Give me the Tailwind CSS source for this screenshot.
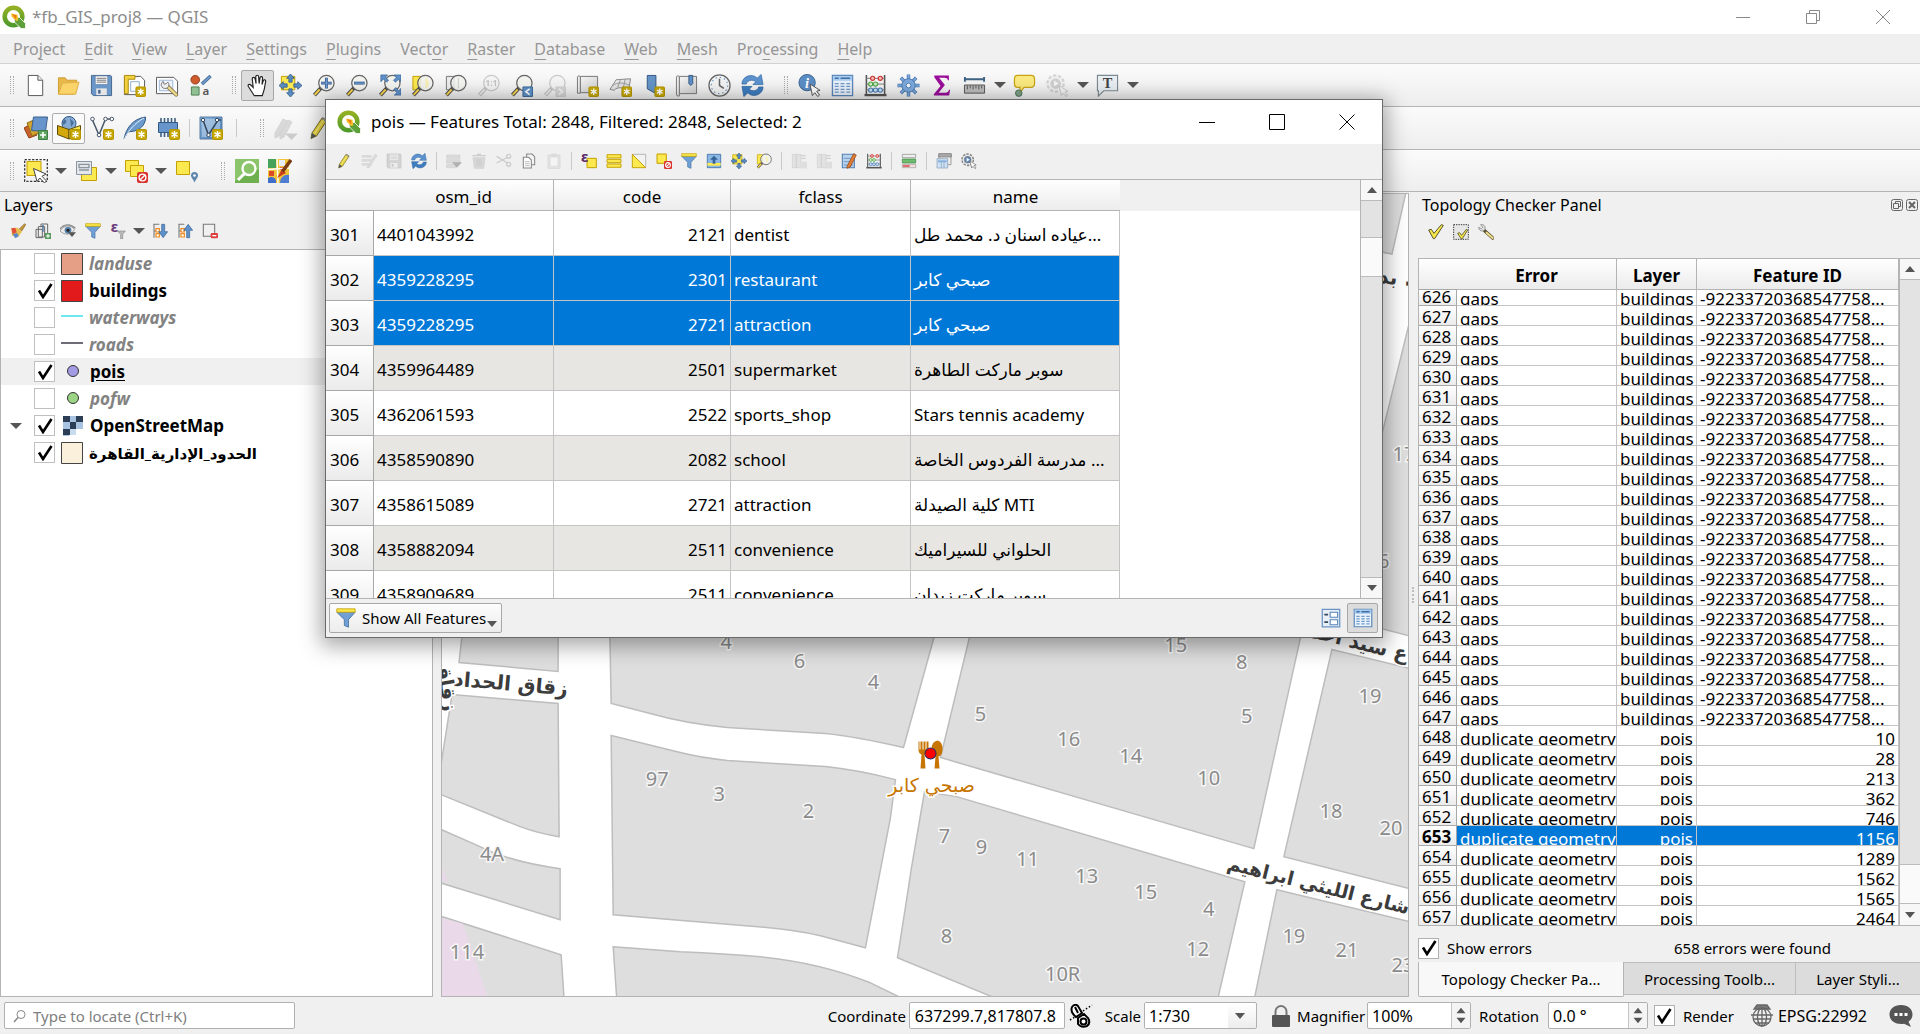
<!DOCTYPE html>
<html lang="en">
<head>
<meta charset="utf-8">
<title>*fb_GIS_proj8 — QGIS</title>
<script src="https://cdn.jsdelivr.net/npm/@tailwindcss/browser@4"></script>
</head>
<body class="h-screen flex flex-col overflow-hidden bg-[#f0f0f0] text-black text-[15px] leading-5 font-['Noto_Sans','DejaVu_Sans',sans-serif]">

<svg class="absolute size-0" aria-hidden="true">
  <defs>
    <linearGradient id="g-blue" x1="0" y1="0" x2="1" y2="1"><stop offset="0" stop-color="#8fb8e0"/><stop offset="1" stop-color="#3f78b5"/></linearGradient>
    <linearGradient id="g-green" x1="0" y1="0" x2="0" y2="1"><stop offset="0" stop-color="#93b023"/><stop offset="1" stop-color="#4f9a2c"/></linearGradient>
    <linearGradient id="g-grey" x1="0" y1="0" x2="1" y2="1"><stop offset="0" stop-color="#f6f6f6"/><stop offset="1" stop-color="#cfcfcf"/></linearGradient>
  </defs>
  <symbol id="star" viewBox="0 0 24 24"><rect x="13.500" y="13.500" width="10" height="10" rx="1" fill="#c8a800" stroke="#b39500"/><path d="M18.500 15v7M15.500 16.700l6 3.600M21.500 16.700l-6 3.600" stroke="#fff" stroke-width="1.500"/></symbol>
  <symbol id="mag" viewBox="0 0 24 24"><path d="M10 14l-7.500 8" stroke="#4a4a4a" stroke-width="4"/><path d="M8 16.200l-5.200 5.500" stroke="#fcd94e" stroke-width="2"/><circle cx="15" cy="9.500" r="8" fill="#f3f3ee" fill-opacity=".85" stroke="#666" stroke-width="1.300"/></symbol>
  <symbol id="pen" viewBox="0 0 24 24"><path d="M5 17L15 2l4.500 3L9.500 20 4 22.500z" fill="#e8d43c" stroke="#77702a"/><path d="M5 17l4.500 3L4 22.500z" fill="#555"/><path d="M15 2l4.500 3" stroke="#8a8a7a" stroke-width="2.500"/><path d="M7.500 17.500l9.500-14" stroke="#faf19a"/></symbol>
  <symbol id="qgis" viewBox="0 0 24 24"><circle cx="11.500" cy="11.500" r="8.800" fill="none" stroke="url(#g-green)" stroke-width="4.600"/><path d="M12 12.500h5.500l6 6v5h-4.500l-6.500-6.500z" fill="#5da03a" stroke="#fff" stroke-width=".8"/><path d="M9 8.500l6.500 1.200.8 5.800-2 .5-4.500-4z" fill="#f5c22c"/><path d="M10 9l4.500 1.500-.5 4z" fill="#ee7913"/></symbol>
  <symbol id="new" viewBox="0 0 24 24"><path d="M4.500 1.500h10l5 5v16h-15z" fill="#fff" stroke="#555"/><path d="M14.500 1.500v5h5" fill="#eee" stroke="#555"/></symbol>
  <symbol id="open" viewBox="0 0 24 24"><path d="M1.500 4h7l2 2.500h10V10L18 21H1.500z" fill="#e8b84a" stroke="#cf9c30"/><path d="M1.500 21l4-11.500 17.500-1-3.500 12.500z" fill="#fbd469" stroke="#dcae45"/></symbol>
  <symbol id="save" viewBox="0 0 24 24"><path d="M2.500 1.500h19l1 1v20H3.500l-2-2v-19z" fill="#6a97c8" stroke="#44648c"/><path d="M5.500 2h13v9h-13z" fill="#f4f4f4" stroke="#51749d" stroke-width=".6"/><path d="M7 4.500h10M7 6.500h10M7 8.500h10" stroke="#777"/><path d="M6.500 15h11v7h-11z" fill="#e6e6e6"/><path d="M8.500 16.500h2.500v4H8.500z" fill="#44648c"/></symbol>
  <symbol id="newlay" viewBox="0 0 24 24"><path d="M1.500 2.500h17l4 4v15h-21z" fill="#fff" stroke="#555"/><path d="M1.500 1.500h11v4h-7v15h-4z" fill="#f2d13d" stroke="#a98a14"/><path d="M8 8h9v10H8z" fill="#fff" stroke="#8eabcb"/><use href="#star"/></symbol>
  <symbol id="laymgr" viewBox="0 0 24 24"><path d="M.5 3.500h18l4 4v13H.5z" fill="#fff" stroke="#555"/><path d="M3.500 6.500h14v11h-14z" fill="#eef3fa" stroke="#9db6d6"/><path d="M11 12l10 9.500" stroke="#7d7142" stroke-width="4.200" stroke-linecap="round"/><path d="M13 14l8 7.500" stroke="#ecd68c" stroke-width="2.600" stroke-linecap="round"/><path d="M12.500 8.500a4 4 0 1 1-5-.8l1 3 2.300-.7z" fill="#eee" stroke="#777"/></symbol>
  <symbol id="style" viewBox="0 0 24 24"><circle cx="6.500" cy="6" r="4.500" fill="#cf5b2c" stroke="#90401f"/><path d="M13.500 10.500l9-8.500" stroke="#466a92" stroke-width="3.500"/><path d="M14 10l8-7.500" stroke="#6f9bcc" stroke-width="2"/><path d="M2.500 13.500h8v8.500h-8z" fill="#8fc092" stroke="#4f7f55"/><text x="14" y="22" font-size="12" font-weight="600" fill="#555">a</text></symbol>
  <symbol id="hand" viewBox="0 0 24 24"><path d="M8.500 22.500L2.500 13c-1-2 1-3 2.500-1.500L7.500 14 6.500 5c0-2 2.500-2 3 0l1 5-.3-7c0-2.300 3-2.300 3 0l.5 7 .9-6c.4-2 2.900-1.600 2.700.5l-.6 6.500 1.300-4c.7-1.700 2.900-1 2.500 1l-1.500 8-2 6.500z" fill="#fff" stroke="#222" stroke-width="1.200"/></symbol>
  <symbol id="arrows4" viewBox="0 0 24 24"><path d="M12 0l4 4.500h-2.300v4h-3.400v-4H8zM12 24l4-4.500h-2.300v-4h-3.400v4H8zM0 12l4.500-4v2.300h4v3.400h-4V16zM24 12l-4.500-4v2.300h-4v3.400h4V16z" fill="#5a8cc4" stroke="#2f5580" stroke-width=".8"/></symbol>
  <symbol id="pansel" viewBox="0 0 24 24"><path d="M2.500 2.500h14v14h-14z" fill="#fce94f" stroke="#c4a000"/><use href="#arrows4"/></symbol>
  <symbol id="zin" viewBox="0 0 24 24"><use href="#mag"/><path d="M15 4v11M9.500 9.500h11" stroke="#30588c" stroke-width="3"/><path d="M15 4.500v10M10 9.500h10" stroke="#6d9bd0" stroke-width="1.500"/></symbol>
  <symbol id="zout" viewBox="0 0 24 24"><use href="#mag"/><path d="M9.500 9.500h11" stroke="#30588c" stroke-width="3"/><path d="M10 9.500h10" stroke="#6d9bd0" stroke-width="1.500"/></symbol>
  <symbol id="zfull" viewBox="0 0 24 24"><use href="#mag"/><path d="M3 1h7L7.700 3.300l3.300 3.200-2 2-3.200-3.300L3 8zM24 1v7l-2.500-2.500-3.300 3-2-2 3.200-3.200L17 1zM24 22v-7l-2.500 2.500-3-3.300-2 2 3.200 3.300L17 22z" fill="#5f92ca" stroke="#3d689b" stroke-width=".8"/></symbol>
  <symbol id="zsel" viewBox="0 0 24 24"><path d="M2 2.500h8v14H2z" fill="#fce94f" stroke="#c4a000"/><use href="#mag"/><path d="M15 4a6 6 0 0 1 0 11z" fill="#f7f1b8"/></symbol>
  <symbol id="zlay" viewBox="0 0 24 24"><path d="M2.500 2.500h8v14h-8z" fill="#eee" stroke="#777"/><use href="#mag"/><path d="M15 4v11" stroke="#ccc"/></symbol>
  <symbol id="z11" viewBox="0 0 24 24"><use href="#mag"/><text x="15" y="13" font-size="9" font-weight="bold" text-anchor="middle" fill="#555">1:1</text></symbol>
  <symbol id="zlast" viewBox="0 0 24 24"><use href="#mag"/><path d="M13.500 13.500h10v10h-10z" fill="#5f92ca" stroke="#3d689b"/><path d="M20.500 15.500l-4 3 4 3" fill="none" stroke="#fff" stroke-width="1.600"/></symbol>
  <symbol id="znext" viewBox="0 0 24 24"><use href="#mag"/><path d="M13.500 13.500h10v10h-10z" fill="#999" stroke="#888"/><path d="M16.500 15.500l4 3-4 3" fill="none" stroke="#fff" stroke-width="1.600"/></symbol>
  <symbol id="mapview" viewBox="0 0 24 24"><path d="M4.500 2.500h18v17h-18z" fill="url(#g-grey)" stroke="#777"/><path d="M1.500 4a1.500 1.500 0 0 1 3-1v17h-3z" fill="#eee" stroke="#777"/><use href="#star"/></symbol>
  <symbol id="map3d" viewBox="0 0 24 24"><path d="M1 16L7.500 6l15-1-2 12c-5-3-12-4-15 0z" fill="url(#g-grey)" stroke="#888"/><path d="M4 12c5-4 12-3 17.500 0M12 5.500L9 14M17 5l-2 9" fill="none" stroke="#999"/><use href="#star"/></symbol>
  <symbol id="bkadd" viewBox="0 0 24 24"><path d="M5.500 1.500h9v19l-9-5z" fill="#6594c8" stroke="#34567f"/><use href="#star"/></symbol>
  <symbol id="bks" viewBox="0 0 24 24"><path d="M4.500 2.500h18v18h-18z" fill="url(#g-grey)" stroke="#777"/><path d="M1.500 4a1.500 1.500 0 0 1 3-1v20h-1a2 2 0 0 1-2-2z" fill="#eee" stroke="#777"/><path d="M14.500 1.500h4V10l-2 2-2-2z" fill="#5f92ca" stroke="#34567f"/></symbol>
  <symbol id="clock" viewBox="0 0 24 24"><circle cx="12" cy="12" r="11" fill="#f4f4f4" stroke="#666" stroke-width="1.300"/><path d="M12 5v7l4.500 3" fill="none" stroke="#666" stroke-width="1.600"/><circle cx="12" cy="12" r="8.500" fill="none" stroke="#6b97c8" stroke-dasharray="1.500 2.950" stroke-width="1.200"/></symbol>
  <symbol id="refresh" viewBox="0 0 24 24"><path d="M1 10.500C1 4 8 0 14 2.300l3 2L21 .5 23 11H12.500l3-3C12 5.500 7 6 5.500 10.500z" fill="#5c93cf" stroke="#3a6ea8" stroke-width=".8"/><path d="M23 13.500C23 20 16 24 10 21.700l-3-2-4 3.800L1 13h10.500l-3 3c3.500 2.500 8.500 2 10-2.500z" fill="#3f7dc0" stroke="#3268a3" stroke-width=".8"/></symbol>
  <symbol id="info" viewBox="0 0 24 24"><circle cx="9.500" cy="9" r="8.500" fill="#5b8ec6" stroke="#38638f"/><text x="9.500" y="14.500" font-size="15" font-weight="bold" font-style="italic" font-family="Liberation Serif" text-anchor="middle" fill="#fff">i</text><path d="M12.500 10.500l2.500 12 2.500-3 3 4 2-1.500-3-4 3.500-1z" fill="#fff" stroke="#555"/></symbol>
  <symbol id="table" viewBox="0 0 24 24"><path d="M1.500 1.500h21v21h-21z" fill="#eaf2fb" stroke="#5b87bb" stroke-width="1.400"/><path d="M2 2h20v5H2z" fill="#a9cdf0"/><path d="M4 4.500h4M10 4.500h10" stroke="#426fa5" stroke-width="1.600"/><path d="M4 10h4M10 10h4M16 10h4M4 13h4M10 13h4M16 13h4M4 16h4M10 16h4M16 16h4M4 19h4M10 19h4M16 19h4" stroke="#6f9bcb" stroke-width="1.300"/></symbol>
  <symbol id="abacus" viewBox="0 0 24 24"><path d="M2.500 1v20M21.500 1v20" stroke="#555" stroke-width="1.600"/><path d="M2 4.500h20M2 10.500h20M2 16.500h20" stroke="#777"/><path d="M.5 22h23" stroke="#555" stroke-width="2.400"/><g stroke-width="1.200"><circle cx="9" cy="4.500" r="2.200" fill="#f4c0bd" stroke="#cc2f2c"/><circle cx="17" cy="4.500" r="2.200" fill="#f4c0bd" stroke="#cc2f2c"/><circle cx="7" cy="10.500" r="2.200" fill="#d2f0cc" stroke="#55a84b"/><circle cx="12" cy="10.500" r="2.200" fill="#d2f0cc" stroke="#55a84b"/><circle cx="7" cy="16.800" r="2.200" fill="#cfe3f5" stroke="#4a7eb5"/><circle cx="12" cy="16.800" r="2.200" fill="#cfe3f5" stroke="#4a7eb5"/><circle cx="17" cy="16.800" r="2.200" fill="#cfe3f5" stroke="#4a7eb5"/></g></symbol>
  <symbol id="gear" viewBox="0 0 24 24"><g stroke="#4b7cb5" stroke-width="3.600"><path d="M12 .5v23M.5 12h23M4 4l16 16M20 4L4 20"/></g><g stroke="#7ea9dc" stroke-width="2"><path d="M12 1v22M1 12h22M4.300 4.300l15.400 15.400M19.700 4.300L4.300 19.700"/></g><circle cx="12" cy="12" r="7" fill="#7ea9dc" stroke="#4b7cb5"/><circle cx="12" cy="12" r="2.500" fill="#f0f5fb" stroke="#4b7cb5"/></symbol>
  <symbol id="sigma" viewBox="0 0 24 24"><path d="M4.500 1.500h15.200v5h-1c-.5-2-1.500-2.700-3.500-2.700H9.500l6 7.700-6.500 8h7c2.200 0 3.200-.9 4-3h1l-1 6H4v-1.500l7-8.500-6.500-9z" fill="#9b0d9b"/></symbol>
  <symbol id="ruler" viewBox="0 0 24 24"><path d="M2 5.500h20M2 3v5M22 3v5" stroke="#3f6385" stroke-width="2"/><path d="M1.500 11.500h21v8.500h-21z" fill="#bdbdbd" stroke="#555"/><path d="M4.500 12v4M7.500 12v3M10.500 12v4M13.500 12v3M16.500 12v4M19.500 12v3" stroke="#555"/></symbol>
  <symbol id="tip" viewBox="0 0 24 24"><path d="M5 1.500h14c3 0 3.500 1.500 3.500 4v4.500c0 3-1 4-4 4h-7L7 20l.5-6H5c-2.500 0-3.500-1-3.500-4V5.500c0-3 1-4 3.500-4z" fill="#fbe980" stroke="#c8a415" stroke-width="1.300"/><circle cx="6" cy="20" r="3.400" fill="#7ea386" stroke="#4f7358"/></symbol>
  <symbol id="gearcur" viewBox="0 0 24 24"><circle cx="10" cy="10" r="8.500" fill="#ececec" stroke="#888" stroke-width="2.400" stroke-dasharray="3.500 1.800"/><circle cx="10" cy="10" r="5" fill="#5b86b8" stroke="#777"/><path d="M8.500 7l4.500 3-4.500 3z" fill="#fff"/><path d="M13.500 12l2.500 10.500 2-2.500 3 3.500 1.500-1.200-2.700-3.500 3-.8z" fill="#fff" stroke="#666"/></symbol>
  <symbol id="textann" viewBox="0 0 24 24"><path d="M1.500 1.500h21v16H8L2.500 23V17.500h-1z" fill="#e9eff3" stroke="#7e8a92" stroke-width="1.200"/><text x="12" y="15" font-size="15" font-weight="bold" font-family="Liberation Serif" text-anchor="middle" fill="#444">T</text></symbol>
  <symbol id="dsm" viewBox="0 0 24 24"><path d="M0 12l7-4 6 11-8 3z" fill="#c9602c" stroke="#8c3d16"/><path d="M3 7l9-4 5 13-9 4z" fill="#d5a32c" stroke="#91701b"/><path d="M9.500 1h14l-2 14.500-14-1z" fill="#6795cb" stroke="#3a618e"/><path d="M14.500 14.500h9v9h-9z" fill="#5ba35f" stroke="#3f7f46"/><path d="M19 16v6M16 19h6" stroke="#fff" stroke-width="1.600"/></symbol>
  <symbol id="gpkg" viewBox="0 0 24 24"><circle cx="12" cy="7.500" r="7" fill="#86acd6" stroke="#335a86"/><path d="M7 3c3 1 3 3 1 5l-3 1M13 1c0 3 3 3 4 6l-3 4" fill="#4a719c"/><path d="M.5 9.500L12 13.500V23L.5 18.500z" fill="#d3a80d" stroke="#5e4c06"/><path d="M12 13.500l11.500-4v9L12 23z" fill="#fae94c" stroke="#5e4c06"/><use href="#star"/></symbol>
  <symbol id="shp" viewBox="0 0 24 24"><path d="M2 3l7 16L15.500 3h7" fill="none" stroke="#48596a" stroke-width="1.500"/><g fill="#fff" stroke="#48596a"><circle cx="2.500" cy="3" r="1.800"/><circle cx="9" cy="19" r="1.800"/><circle cx="15.500" cy="3" r="1.800"/><circle cx="21.800" cy="3" r="1.800"/></g><use href="#star"/></symbol>
  <symbol id="feather" viewBox="0 0 24 24"><path d="M1 23C3 13 9 3 22.500 1c.5 5-3 12-11 14L5 16z" fill="#6c9bcd" stroke="#335a86"/><path d="M1 23C6 14 12 7 21 2" fill="none" stroke="#e3eefa"/><use href="#star"/></symbol>
  <symbol id="chip" viewBox="0 0 24 24"><path d="M5 2v19M8.500 2v19M12 2v19M15.500 2v19M19 2v19" stroke="#3e5f83" stroke-width="1.600"/><path d="M2.500 6.500h19v10h-19z" fill="#6795cb" stroke="#335a86"/><use href="#star"/></symbol>
  <symbol id="virt" viewBox="0 0 24 24"><path d="M1 1h22v22H1z" fill="url(#g-blue)" stroke="#5a7da3"/><path d="M3 3h18v18H3z" fill="#bdd2e8" fill-opacity=".6"/><path d="M4 4l5.500 15L19 4h3" fill="none" stroke="#33475c" stroke-width="1.500"/><g fill="#fff" stroke="#33475c"><circle cx="4" cy="4" r="1.700"/><circle cx="9.500" cy="19" r="1.700"/><circle cx="18" cy="4" r="1.700"/></g><use href="#star"/></symbol>
  <symbol id="pens" viewBox="0 0 24 24"><path d="M1 17L9 3l4 2L5 20l-4 2zM6 18l8-14 4 2-8 15-4 2z" fill="#999" stroke="#888"/><path d="M11 17.500h13L17.500 24z" fill="#777"/></symbol>
  <symbol id="select" viewBox="0 0 24 24"><path d="M3 2.500h14v14H3z" fill="#fce94f" stroke="#c4a000"/><path d="M.7.700h22.600v21.600H.7z" fill="none" stroke="#333" stroke-dasharray="2.200 1.500" stroke-width="1.300"/><path d="M9.500 9.500l3.500 13 2.800-3.500 4.700 5 2-2-4.500-4.700 4-2.300z" fill="#fff" stroke="#444"/></symbol>
  <symbol id="selform" viewBox="0 0 24 24"><path d="M7.500 8.500h15v13h-15z" fill="#fce94f" stroke="#c4a000"/><path d="M2.500 2.500h15v13h-15z" fill="#e4e8ec" stroke="#8b959e"/><path d="M5 5.500h10v3H5zM5 11h10" fill="#fff" stroke="#8b959e" stroke-width="1.300"/></symbol>
  <symbol id="desel" viewBox="0 0 24 24"><path d="M1.500 1.500h13v11h-13z" fill="#fce94f" stroke="#c4a000"/><path d="M6.500 6.500h13v11h-13z" fill="#fce94f" stroke="#c4a000"/><rect x="13" y="13" width="11" height="11" rx="2" fill="#d9322f"/><circle cx="18.500" cy="18.500" r="3.400" fill="none" stroke="#fff" stroke-width="1.400"/><path d="M16 21l5-5" stroke="#fff" stroke-width="1.400"/></symbol>
  <symbol id="desel1" viewBox="0 0 24 24"><path d="M1.500 1.500h14v14h-14z" fill="#fce94f" stroke="#c4a000" stroke-width="1.500"/><rect x="12" y="12" width="12" height="12" rx="2" fill="#d9322f"/><circle cx="18" cy="18" r="3.600" fill="none" stroke="#fff" stroke-width="1.600"/><path d="M15.500 20.500l5-5" stroke="#fff" stroke-width="1.600"/></symbol>
  <symbol id="selloc" viewBox="0 0 24 24"><path d="M2.500 2.500h13v13h-13z" fill="#fce94f" stroke="#c4a000"/><path d="M20.500 23.500c-1-3-3.500-4.500-3.500-7a3.500 3.500 0 0 1 7 0c0 2.500-2.500 4-3.500 7z" fill="#5f87ac"/><circle cx="20.500" cy="16.500" r="1.300" fill="#fff"/></symbol>
  <symbol id="qms" viewBox="0 0 24 24"><path d="M0 0h24v24H0z" fill="#6fb04e"/><path d="M0 0h24v10L0 22z" fill="#8cc46b"/><circle cx="14" cy="9.500" r="6.500" fill="none" stroke="#fff" stroke-width="2.400"/><path d="M9.500 14.500L3 21" stroke="#fff" stroke-width="3"/></symbol>
  <symbol id="osm" viewBox="0 0 24 24"><path d="M0 0h21v24H0z" fill="#f1c63a"/><path d="M0 0h8v9H0z" fill="#47a35a"/><path d="M11 1h6v6h-6z" fill="#e9eef5"/><path d="M1 12h5v5H1zM12 8h4v3h-4z" fill="#d84b25"/><path d="M0 19c5-3 9 1 8 5H0z" fill="#3f6ecb"/><path d="M12 24c0-6 5-9 9-8v8z" fill="#4e7ed2"/><path d="M9 0l1 24M0 10.500l21-1.500" stroke="#fff" stroke-width="1.400"/><path d="M14 10l4 4-9 5z" fill="#c8401c"/><path d="M14.500 12.500L23 1" stroke="#7b3c12" stroke-width="3.500"/></symbol>
  <symbol id="brush" viewBox="0 0 24 24"><path d="M14 9l8-8 1.500 1.500-6 9.500z" fill="#c99a3d" stroke="#7a5a18"/><path d="M2 8l9-1 7 6-6 8-9-2z" fill="#e9c04d"/><path d="M2 8l6-1 2 7-6 3z" fill="#e2503c"/><path d="M4 17l7-2 2 5-5 3z" fill="#5c87c9"/></symbol>
  <symbol id="grp" viewBox="0 0 24 24"><path d="M9 6V1.500h10V17h-4M5 10V5.500h9.500V21H5zM1.500 22V9.500H11V22z" fill="none" stroke="#666" stroke-width="1.500"/><path d="M12 3v10" stroke="#3f6f9f" stroke-width="2"/><rect x="15" y="15" width="9" height="9" fill="#5b9b5f"/><path d="M19.500 16.500v6M16.500 19.500h6" stroke="#fff" stroke-width="1.500"/></symbol>
  <symbol id="eye" viewBox="0 0 24 24"><path d="M0 12C5 3 16 2 22 10c-5 8-15 9-22 2z" fill="#e8ebee" stroke="#777"/><path d="M0 9C5 2 15 0 23 8" fill="none" stroke="#888" stroke-width="2"/><circle cx="12" cy="11" r="5" fill="#547ea8"/><circle cx="12" cy="11" r="2.300" fill="#222"/><path d="M12 14h12l-6 7z" fill="#555"/></symbol>
  <symbol id="funnel" viewBox="0 0 24 24"><path d="M1 5h22l-8 9v9l-5-2v-7z" fill="#6f9fd4" stroke="#4371a5"/><path d="M1 1h22v4H1z" fill="#fbe84c" stroke="#c4a000"/></symbol>
  <symbol id="eps" viewBox="0 0 24 24"><text x="1" y="14" font-size="22" fill="#6b3a7a" font-weight="bold">ε</text><path d="M11 12h12l-4 5v7h-3v-7z" fill="#bbb" stroke="#888"/></symbol>
  <symbol id="expand" viewBox="0 0 24 24"><path d="M2 2h9M3 2v20M3 12h6" stroke="#777" stroke-width="1.600" fill="none"/><path d="M6 8.500h5v5H6zM6 16h5v5H6z" fill="#fff" stroke="#ee8a1d" stroke-width="1.800"/><path d="M14.500 2h4.500v11h4.500l-6.700 9-6.800-9h4.500z" fill="#5f92ca" stroke="#365f90"/></symbol>
  <symbol id="collapse" viewBox="0 0 24 24"><path d="M2 2h9M3 2v20M3 12h6" stroke="#777" stroke-width="1.600" fill="none"/><path d="M6 8.500h5v5H6zM6 16h5v5H6z" fill="#fff" stroke="#ee8a1d" stroke-width="1.800"/><path d="M14.500 22h4.500V11h4.500l-6.700-9-6.800 9h4.500z" fill="#5f92ca" stroke="#365f90"/></symbol>
  <symbol id="remove" viewBox="0 0 24 24"><path d="M2 2h17v18H2z" fill="#f0f0f0" stroke="#777" stroke-width="1.600"/><rect x="13" y="15" width="11" height="8" rx="2" fill="#df3d3d"/><path d="M15.500 19h6" stroke="#fff" stroke-width="2"/></symbol>
  <symbol id="multi" viewBox="0 0 24 24"><path d="M1 3h15v4H1zM1 9h15v4H1zM1 15h15v4H1z" fill="#aaa"/><path d="M9 22L21 2l3 2-12 18z" fill="#bbb" stroke="#777"/></symbol>
  <symbol id="addf" viewBox="0 0 24 24"><path d="M1 3h20v5H1zM1 10h20v5H1zM1 17h14v5H1z" fill="#aaa" stroke="#888"/><path d="M9 14h15l-7.500 8z" fill="#222"/></symbol>
  <symbol id="trash" viewBox="0 0 24 24"><path d="M3 7h18l-2 16H5z" fill="#c99" stroke="#977"/><path d="M2 4h20M9 2h6M9 9v11M12 9v11M15 9v11" stroke="#977" stroke-width="2"/></symbol>
  <symbol id="cut" viewBox="0 0 24 24"><path d="M1 5l16 10M1 15L18 6" stroke="#777" stroke-width="2"/><circle cx="19" cy="5" r="3" fill="none" stroke="#777" stroke-width="2"/><circle cx="19" cy="17" r="3" fill="none" stroke="#777" stroke-width="2"/></symbol>
  <symbol id="copy" viewBox="0 0 24 24"><path d="M8.500 1.500h8l4 4v12h-12z" fill="#f4f4f4" stroke="#888" stroke-width="1.600"/><path d="M3.500 6.500h8l4 4v12h-12z" fill="#fff" stroke="#888" stroke-width="1.600"/><path d="M6 13h7M6 16h7M6 19h7" stroke="#999"/></symbol>
  <symbol id="paste" viewBox="0 0 24 24"><path d="M3 3h18v20H3z" fill="#ccc" stroke="#888"/><path d="M6 6h12v14H6z" fill="#fff" stroke="#999"/><path d="M8 1h8v4H8z" fill="#aaa"/></symbol>
  <symbol id="selexp" viewBox="0 0 24 24"><path d="M9 8h14v14H9z" fill="#fce94f" stroke="#c4a000" stroke-width="1.500"/><text x="0" y="14" font-size="22" fill="#5c2c6a" font-weight="bold">ε</text></symbol>
  <symbol id="selall" viewBox="0 0 24 24"><path d="M1.500 2.500h21v5h-21zM1.500 9.500h21v5h-21zM1.500 16.500h21v5h-21z" fill="#fce94f" stroke="#c4a000" stroke-width="1.400"/></symbol>
  <symbol id="invert" viewBox="0 0 24 24"><path d="M2 2h20v20z" fill="#f2f2f2" stroke="#999"/><path d="M2 2v20h20z" fill="#fce94f" stroke="#c4a000" stroke-width="1.400"/></symbol>
  <symbol id="movetop" viewBox="0 0 24 24"><path d="M2 2h20v20H2z" fill="#8db6e2" stroke="#4f7fb3" stroke-width="1.500"/><path d="M2 15h20v4H2z" fill="#fce94f"/><path d="M12 4l6 6h-4v6h-4v-6H6z" fill="#34639a"/></symbol>
  <symbol id="newfld" viewBox="0 0 24 24"><path d="M2 2h6v20H2zM8 2h7v20H8z" fill="#c4c4b4" stroke="#888"/><path d="M14 13h10v10H14z" fill="#bbb5a0"/><path d="M15 4h7M15 8h7" stroke="#888" stroke-width="2"/></symbol>
  <symbol id="calc" viewBox="0 0 24 24"><path d="M2 2h18v20H2z" fill="#b8d2ee" stroke="#4f7fb3" stroke-width="1.600"/><path d="M4 8h14M4 13h14M4 18h14" stroke="#4f7fb3"/><path d="M9 20L19 1l4 2-9 18-5 2z" fill="#e07b35" stroke="#88410f"/></symbol>
  <symbol id="cond" viewBox="0 0 24 24"><path d="M2 2h20v5H2z" fill="#eee" stroke="#888"/><path d="M2 9h20v6H2z" fill="#6dbb6e" stroke="#3c8a3f"/><path d="M2 17h20v5H2z" fill="#f3dede" stroke="#999"/><path d="M3 19.500h10" stroke="#d33" stroke-width="2"/></symbol>
  <symbol id="dock" viewBox="0 0 24 24"><path d="M4.500 1.500h18v16h-18z" fill="#eee" stroke="#777"/><path d="M4 1h19v5H4z" fill="#aaa" stroke="#777"/><path d="M1.500 8.500h16v14h-16z" fill="#cfe2f5" stroke="#7f98b3"/><path d="M3 11h13v3H3z" fill="#86afd9"/><path d="M8 14v8M12 14v8" stroke="#7f98b3"/></symbol>
  <symbol id="validate" viewBox="0 0 24 24"><path d="M1 9l4-1 4 6L20 1l3 1L10 22H8z" fill="#f7e74a" stroke="#4a4a28" stroke-width="1.400"/></symbol>
  <symbol id="validext" viewBox="0 0 24 24"><path d="M1 1h22v22H1z" fill="#e6e6e6" stroke="#333" stroke-dasharray="2 1.600" stroke-width="1.500"/><path d="M7 14l3-1 3 4 7-9 2 1-8 13h-2z" fill="#f7e74a" stroke="#4a4a28" stroke-width="1.200"/></symbol>
  <symbol id="wrench" viewBox="0 0 24 24"><path d="M10 10l12 11" stroke="#5a5132" stroke-width="5" stroke-linecap="round"/><path d="M13 13l9 8" stroke="#f0dc8d" stroke-width="3" stroke-linecap="round"/><path d="M4 1c4-1 8 2 6.500 7L8 10.500C4 11 1 9 1 5l4 2 2-2z" fill="#ddd" stroke="#777"/></symbol>
  <symbol id="form" viewBox="0 0 24 24"><path d="M1.500 1.500h21v21h-21z" fill="#e9eff6" stroke="#6a93c4" stroke-width="1.500"/><path d="M4 8h4.500M4 17h4.500" stroke="#34475c" stroke-width="2"/><path d="M11 5h9v6h-9zM11 14h9v6h-9z" fill="#fff" stroke="#5585ba" stroke-width="1.300"/></symbol>
</svg>

<header class="shrink-0">
  <div class="h-[34px] bg-white flex items-center pl-[2px] text-[17px] text-[#8c8c8c]">
    <svg class="size-6"><use href="#qgis"/></svg>
    <h1 class="ml-1.5 flex-1">*fb_GIS_proj8 — QGIS</h1>
    <button aria-label="Minimize" class="w-[70px] h-full grid place-items-center"><svg class="size-4" viewBox="0 0 16 16"><path d="M1 8.500h14" stroke="#888"/></svg></button>
    <button aria-label="Restore" class="w-[70px] h-full grid place-items-center"><svg class="size-4" viewBox="0 0 16 16" fill="none" stroke="#888"><path d="M1.500 4.500h10v10h-10zM4.500 4V1.500h10v10H12"/></svg></button>
    <button aria-label="Close" class="w-[70px] h-full grid place-items-center mr-0.5"><svg class="size-4" viewBox="0 0 16 16"><path d="M1 1l14 14M15 1L1 15" stroke="#888"/></svg></button>
  </div>
  <nav id="menu" class="h-[30px] border-b border-[#d2d2d2] flex items-center gap-[19px] pl-[13px] text-base text-[#969696] underline-offset-4"></nav>
  <div id="tb1" class="h-[43px] border-b border-[#b4b4b4] bg-linear-to-b from-[#fbfbfb] to-[#eeeeee] flex items-center"></div>
  <div id="tb2" class="h-[43px] border-b border-[#b4b4b4] bg-linear-to-b from-[#fbfbfb] to-[#eeeeee] flex items-center"></div>
  <div id="tb3" class="h-[42px] border-b border-[#b4b4b4] bg-linear-to-b from-[#fbfbfb] to-[#eeeeee] flex items-center"></div>
</header>

<main class="flex-1 min-h-0 flex">
  <section class="w-[433px] shrink-0 flex flex-col">
    <h2 class="h-[26px] pl-1 flex items-center text-base">Layers</h2>
    <div id="tbl" class="h-[31px] pl-[5px] flex items-center pb-1.5"></div>
    <ul id="layers" class="flex-1 bg-white border border-[#b4b4b4] text-[17px] font-bold"></ul>
  </section>
  <div class="w-2 shrink-0"></div>
  <section class="flex-1 min-w-0 border border-[#b4b4b4] bg-white mt-px">
    <svg class="size-full" viewBox="442 195 965 803" preserveAspectRatio="xMinYMin slice" aria-label="Map canvas">
      <g fill="#dedede" stroke="#bdbdbd" stroke-width="1.500">
        <path d="M466 600l-7 63 99 9v-72z"/>
        <path d="M452 695l106 9 1 133q-20-3-39-10-20-8-79-32v-30z"/>
        <path d="M430 825l50 22q30 15 80 22v51L430 880z"/>
        <path d="M430 913l131 42 4 60H430z"/>
        <path d="M609 600l2 104 39 10q35 10 77 14l98 6q30 3 78 14l41-148z"/>
        <path d="M611 736l69 17q20 5 47 8l98 6q30 3 70 13l-5 38-25 130-45-12q-30-7-75-10l-132-11z"/>
        <path d="M613 947l67 5q45 2 80 5 60 6 110 26l45 22H617z"/>
        <path d="M978 600l-38 158 313 91 55-249z"/>
        <path d="M924 792l32 5 288 85-30 130-186 0-131-54q8-50 14-90z"/>
        <path d="M1331 650l90 22v220l-138-35z"/>
        <path d="M1276 890l150 36v90h-176z"/>
        <path d="M1340 180h68l-17 75-51-10z"/>
        <path d="M1412 305l-4 20-32 130v173l50 13V305z"/>
      </g>
      <path d="M442 918l21 6 27 80h-48zM442 868l6 15-6-2z" fill="#ead9e8"/>
      <g id="nums" font-size="20" text-anchor="middle" fill="#8b8b8b" stroke="#f6f6f6" stroke-width="3" paint-order="stroke" font-family="Noto Sans"></g>
      <g font-size="20" font-weight="bold" text-anchor="middle" fill="#3c3c3c" stroke="#fff" stroke-width="3" paint-order="stroke" font-family="DejaVu Sans">
        <text transform="translate(510 691) rotate(5)">زقاق الحداد</text>
        <text transform="translate(440 688) rotate(80)">زقاق</text>
        <text transform="translate(1316 892) rotate(14)" font-size="19">شارع الليثي ابراهيم</text>
        <text transform="translate(1350 648) rotate(14)">ع سيد احمد</text>
        <text transform="translate(1388 285) rotate(4)">بدر .</text>
      </g>
      <text x="931" y="792" font-size="19" text-anchor="middle" fill="#c77400" stroke="#fff" stroke-width="3" paint-order="stroke" font-family="DejaVu Sans">صبحي كابر</text>
      <path d="M918 742v8q0 4 3 5l-1 14h5l-1-14q4-1 4-5v-8h-2v8h-1v-8h-2v8h-1v-8h-2v8h-1v-8zM937 741q5 1 5 9 0 6-4 7l1 12h-5l1-12q-4-1-4-7 0-8 6-9z" fill="#c77400"/>
      <circle cx="930" cy="754" r="5.500" fill="#f00" stroke="#232d6b"/>
    </svg>
  </section>
  <div class="w-2 shrink-0 grid place-items-center"><span class="h-4 border-l-2 border-dotted border-[#bbb]"></span></div>
  <section class="w-[503px] shrink-0 flex flex-col">
    <div class="h-[26px] pl-[5px] pr-0.5 flex items-center gap-[3px] text-base">
      <h2 class="flex-1">Topology Checker Panel</h2>
      <button aria-label="Float panel"><svg class="size-3" viewBox="0 0 12 12" fill="none" stroke="#666"><rect x=".5" y=".5" width="11" height="11" rx="2"/><path d="M2.500 4.500h5v5h-5zM4.500 4V2.500h5v5H8"/></svg></button>
      <button aria-label="Close panel"><svg class="size-3" viewBox="0 0 12 12" fill="none" stroke="#666"><rect x=".5" y=".5" width="11" height="11" rx="2"/><path d="M3 3l6 6M9 3L3 9" stroke-width="2"/></svg></button>
    </div>
    <div id="tbr" class="h-10 shrink-0 pl-[6px] flex items-start -mt-0.5 mb-0.5"></div>
    <div class="flex-1 min-h-0 ml-px border border-r-0 border-[#b4b4b4] bg-white flex text-[17px]">
      <div class="flex-1 min-w-0 overflow-hidden">
        <table class="w-full table-fixed border-separate border-spacing-0">
          <thead>
            <tr class="h-[31px] bg-linear-to-b from-white to-[#ebebeb]">
              <th class="w-[38px] border-b border-[#a8a8a8]"></th>
              <th class="w-[160px] border-b border-r border-[#b4b4b4] pt-1">Error</th>
              <th class="w-20 border-b border-r border-[#b4b4b4] pt-1">Layer</th>
              <th class="border-b border-r border-[#b4b4b4] pt-1">Feature ID</th>
            </tr>
          </thead>
          <tbody id="errs"></tbody>
        </table>
      </div>
      <div class="w-[21px] shrink-0 flex flex-col border-l border-[#b4b4b4] bg-[#e3e3e3]">
        <button aria-label="Scroll up" class="h-[21px] bg-[#f7f7f7] border-b border-[#bbb] grid place-items-center"><svg class="w-3 h-2" viewBox="0 0 12 8"><path d="M1 7h10L6 1z" fill="#555"/></svg></button>
        <div class="flex-1"></div>
        <div class="h-10 bg-[#fafafa] border-y border-[#bbb]"></div>
        <button aria-label="Scroll down" class="h-[21px] bg-[#f7f7f7] grid place-items-center"><svg class="w-3 h-2" viewBox="0 0 12 8"><path d="M1 1h10L6 7z" fill="#555"/></svg></button>
      </div>
    </div>
    <div class="h-[36px] shrink-0 flex items-center pt-2 pl-px">
      <label class="flex items-center gap-2 w-[256px]"><span class="grid place-items-center"><input type="checkbox" checked class="peer [grid-area:1/1] appearance-none size-[21px] border border-[#b0b0b0] bg-white"><svg class="[grid-area:1/1] size-4 invisible peer-checked:visible pointer-events-none" viewBox="0 0 16 16"><path d="M2 7.500L6 14 14.500 1" fill="none" stroke="#000" stroke-width="2.600"/></svg></span>Show errors</label>
      <span>658 errors were found</span>
    </div>
    <div role="tablist" class="h-[35px] shrink-0 ml-px flex items-start">
      <button role="tab" aria-selected="true" class="w-[206px] h-[35px] bg-[#f8f8f8] border border-t-0 border-[#b4b4b4] rounded-b-xs">Topology Checker Pa...</button>
      <button role="tab" class="w-[172px] h-[33px] bg-[#dcdcdc] border-y border-r border-[#bdbdbd]">Processing Toolb...</button>
      <button role="tab" class="flex-1 h-[33px] bg-[#dcdcdc] border-y border-[#bdbdbd]">Layer Styli...</button>
    </div>
  </section>
</main>

<footer class="h-[37px] shrink-0 flex items-center pl-1 pr-[7px]">
  <label class="w-[291px] h-[27px] flex items-center gap-1.5 px-2 bg-white border border-[#b0b0b0] rounded-xs">
    <svg class="size-3.5" viewBox="0 0 14 14" fill="none" stroke="#888"><circle cx="8" cy="5.500" r="4"/><path d="M5 8.500L1 13" stroke-width="1.500"/></svg>
    <input aria-label="Locate" placeholder="Type to locate (Ctrl+K)" class="flex-1 min-w-0 outline-none placeholder:text-[#808080]">
  </label>
  <div class="flex-1"></div>
  <label for="coord">Coordinate</label>
  <input id="coord" value="637299.7,817807.8" class="ml-[3px] w-[156px] h-[27px] px-[5px] text-base bg-white border border-[#b0b0b0] rounded-xs">
  <button aria-label="Toggle extents" class="ml-1 mr-3"><svg class="size-6" viewBox="0 0 24 24"><path d="M3 3q3-4 6-1l4 7-6 4Q1 8 3 3z" fill="#fff" stroke="#000" stroke-width="2"/><path d="M6 3l3 6M9 14l6-4 4 4q3 5-1 8-6 2-9-2z" fill="#fff" stroke="#000" stroke-width="2"/><circle cx="14.500" cy="17.500" r="3" fill="#fff" stroke="#000" stroke-width="2"/><path d="M14 7l9-6M1 16l5-3" stroke="#000" stroke-dasharray="1.500 2" stroke-width="1.500"/></svg></button>
  <label for="scale">Scale</label>
  <span class="ml-[3px] w-[113px] h-[27px] grid items-center bg-linear-to-b from-white to-[#ededed] border border-[#b0b0b0] rounded-xs">
    <select id="scale" class="[grid-area:1/1] appearance-none text-base pl-1 mr-7 h-[25px] bg-white"><option>1:730</option></select>
    <svg class="[grid-area:1/1] justify-self-end mr-2.5 w-3 h-2 pointer-events-none" viewBox="0 0 12 8"><path d="M1 1h10L6 7z" fill="#555"/></svg>
  </span>
  <button aria-label="Lock scale" class="ml-3.5 mr-1.5"><svg class="w-5 h-6" viewBox="0 0 20 24"><path d="M4.500 11V7.500a5.500 5.500 0 0 1 11 0V11" fill="none" stroke="#777" stroke-width="2"/><rect x="1" y="11" width="18" height="12" rx="1" fill="#555"/></svg></button>
  <label for="magn">Magnifier</label>
  <span class="ml-0.5 w-[104px] h-[27px] flex bg-white border border-[#b0b0b0] rounded-xs">
    <input id="magn" value="100%" class="w-[83px] pl-1 text-base outline-none">
    <svg class="w-[20px] h-full bg-[#f4f4f4] border-l border-[#c4c4c4]" viewBox="0 0 20 25"><path d="M5 10h10l-5-6zM5 15h10l-5 6z" fill="#555"/></svg>
  </span>
  <label for="rot" class="ml-2">Rotation</label>
  <span class="ml-[9px] w-[100px] h-[27px] flex bg-white border border-[#b0b0b0] rounded-xs">
    <input id="rot" value="0.0 °" class="w-[79px] pl-1 text-base outline-none">
    <svg class="w-[20px] h-full bg-[#f4f4f4] border-l border-[#c4c4c4]" viewBox="0 0 20 25"><path d="M5 10h10l-5-6zM5 15h10l-5 6z" fill="#555"/></svg>
  </span>
  <label class="ml-1.5 flex items-center gap-2"><span class="grid place-items-center"><input type="checkbox" checked class="peer [grid-area:1/1] appearance-none size-[21px] border border-[#b0b0b0] bg-white"><svg class="[grid-area:1/1] size-4 invisible peer-checked:visible pointer-events-none" viewBox="0 0 16 16"><path d="M2 7.500L6 14 14.500 1" fill="none" stroke="#000" stroke-width="2.600"/></svg></span>Render</label>
  <button class="ml-4 flex items-center gap-1 text-base"><svg class="size-6" viewBox="0 0 24 24" fill="none" stroke="#666" stroke-width="1.300"><path d="M4 5h16l-3-4H7z" fill="#777"/><circle cx="12" cy="13" r="9"/><ellipse cx="12" cy="13" rx="4.500" ry="9"/><path d="M12 4v18M1 11h22M3 15h18M5 19h14"/></svg>EPSG:22992</button>
  <button aria-label="Messages" class="ml-[22px]"><svg class="size-6" viewBox="0 0 24 24"><path d="M12 1c7 0 11.500 4 11.500 9.500 0 3-1.500 5.500-4 7.200L22 23l-7-3.200C7 21 .5 17 .5 10.500.5 5 5 1 12 1z" fill="#555"/><path d="M5.500 9h3v3h-3zM10.500 9h3v3h-3zM15.500 9h3v3h-3z" fill="#fff"/></svg></button>
</footer>

<!-- attribute table window -->
<section role="dialog" aria-label="Attribute table" class="absolute left-[325px] top-[99px] w-[1058px] h-[539px] flex flex-col border border-[#6a6a6a] bg-[#f0f0f0] shadow-[0_4px_20px_4px_rgba(0,0,0,0.35)]">
  <div class="h-[44px] shrink-0 bg-white flex items-center pl-[11px] text-[17px]">
    <svg class="size-6"><use href="#qgis"/></svg>
    <h2 class="ml-2.5 flex-1">pois — Features Total: 2848, Filtered: 2848, Selected: 2</h2>
    <button aria-label="Minimize" class="w-[70px] h-full grid place-items-center"><svg class="size-4" viewBox="0 0 16 16"><path d="M0 8.500h16" stroke="#000"/></svg></button>
    <button aria-label="Maximize" class="w-[70px] h-full grid place-items-center"><svg class="size-4" viewBox="0 0 16 16"><path d="M.5.500h15v15H.5z" fill="none" stroke="#000"/></svg></button>
    <button aria-label="Close" class="w-[70px] h-full grid place-items-center"><svg class="size-4" viewBox="0 0 16 16"><path d="M.5.500l15 15M15.500.500l-15 15" stroke="#000"/></svg></button>
  </div>
  <div id="tbd" class="h-[35px] shrink-0 pl-[5px] pb-0.5 flex items-center"></div>
  <div class="flex-1 min-h-0 flex bg-white border-y border-[#b4b4b4] text-[17px]">
    <div class="flex-1 min-w-0 overflow-hidden">
      <div class="bg-linear-to-r from-[#f0f0f0] to-[#f0f0f0] bg-[length:100%_31px] bg-no-repeat">
      <table class="w-[794px] table-fixed border-separate border-spacing-0">
        <thead>
          <tr class="h-[31px] bg-linear-to-b from-white to-[#ebebeb]">
            <th class="w-12 border-b border-[#a8a8a8]"></th>
            <th class="w-[180px] border-b border-r border-[#b4b4b4] pt-1 font-normal">osm_id</th>
            <th class="w-[177px] border-b border-r border-[#b4b4b4] pt-1 font-normal">code</th>
            <th class="w-[180px] border-b border-r border-[#b4b4b4] pt-1 font-normal">fclass</th>
            <th class="border-b border-[#b4b4b4] pt-1 font-normal">name</th>
          </tr>
        </thead>
        <tbody id="feats"></tbody>
      </table>
      </div>
    </div>
    <div class="w-[22px] shrink-0 flex flex-col border-l border-[#b4b4b4] bg-[#e3e3e3]">
      <button aria-label="Scroll up" class="h-[21px] bg-[#f7f7f7] border-b border-[#bbb] grid place-items-center"><svg class="w-3 h-2" viewBox="0 0 12 8"><path d="M1 7h10L6 1z" fill="#555"/></svg></button>
      <div class="h-9"></div>
      <div class="h-10 bg-[#fafafa] border-y border-[#bbb]"></div>
      <div class="flex-1"></div>
      <button aria-label="Scroll down" class="h-[21px] bg-[#f7f7f7] border-t border-[#bbb] grid place-items-center"><svg class="w-3 h-2" viewBox="0 0 12 8"><path d="M1 1h10L6 7z" fill="#555"/></svg></button>
    </div>
  </div>
  <div class="h-[38px] shrink-0 flex items-center pl-[3px] pr-1">
    <button class="w-[173px] h-[30px] flex items-center pl-1.5 gap-1.5 bg-linear-to-b from-[#fdfdfd] to-[#ececec] border border-[#a8a8a8] rounded-xs"><svg class="size-5 shrink-0"><use href="#funnel"/></svg><span class="whitespace-nowrap">Show All Features</span><svg class="w-3 h-2 mt-3 -ml-1.5 shrink-0" viewBox="0 0 12 8"><path d="M1 1h10L6 7z" fill="#555"/></svg></button>
    <div class="flex-1"></div>
    <button aria-label="Form view" class="mr-1.5"><svg class="size-5"><use href="#form"/></svg></button>
    <button aria-label="Table view" class="w-[31px] h-[30px] grid place-items-center bg-[#dcdcdc] border border-[#a8a8a8] rounded-xs"><svg class="size-5"><use href="#table"/></svg></button>
  </div>
</section>

<script>
  const $ = id => document.getElementById(id);

  // menu entries; the letter after & is the mnemonic
  $('menu').innerHTML = ['Pro&ject', '&Edit', '&View', '&Layer', '&Settings', '&Plugins', 'Vect&or', '&Raster', '&Database', '&Web', '&Mesh', 'Pro&cessing', '&Help']
    .map(m => `<a href="#">${m.replace(/&(.)/, '<span class="underline">$1</span>')}</a>`).join('');

  const grip = w => `<span class="${w} flex justify-end pr-[5px]"><span class="h-[18px] w-1 border-x border-dotted border-[#aaa]"></span></span>`;
  const arrow = '<button aria-label="More" class="w-[17px] grid place-items-center"><svg class="w-3 h-2" viewBox="0 0 12 8"><path d="M0 1h12L6 7z" fill="#555"/></svg></button>';
  const sep = w => `<span class="${w} grid place-items-center"><span class="h-[18px] w-px bg-[#c9c9c9]"></span></span>`;
  function bar(id, items, cell, icon) {
    $(id).innerHTML = items.split(' ').map(n => {
      if (n === '||') return grip('w-[19px]');
      if (n === '|g') return grip('w-6');
      if (n === 'v') return arrow;
      if (n === '|') return sep('w-[10px]');
      if (n === '_') return '<span class="w-1"></span>';
      const off = n[0] === '~', on = n[0] === '+', dn = n[0] === '!';
      const name = n.replace(/^[~+!]/, '');
      const frame = on ? 'h-[31px] border border-[#adadad] bg-[#fafafa] rounded-xs' : dn ? 'h-[31px] border border-[#a8a8a8] bg-[#dcdcdc] rounded-xs' : 'h-[31px]';
      return `<button aria-label="${name}" class="${cell} ${frame} grid place-items-center"><svg class="${icon} ${off ? 'opacity-30 grayscale' : ''}"><use href="#${name}"/></svg></button>`;
    }).join('');
  }
  bar('tb1', '|| new open save newlay laymgr style |g !hand pansel zin zout zfull zsel zlay ~z11 zlast ~znext mapview map3d bkadd bks clock refresh |g info table abacus gear sigma ruler v tip ~gearcur v textann v', 'w-[33px]', 'size-[23px]');
  bar('tb2', '|| dsm +gpkg shp feather chip | virt _ | _ |g ~pens pen', 'w-[33px]', 'size-6');
  bar('tb3', '|| select v selform v desel v selloc _ |g qms osm', 'w-[33px]', 'size-6');
  bar('tbl', 'brush grp eye funnel eps v expand collapse remove', 'w-[25px]', 'size-4');
  bar('tbr', 'validate validext wrench', 'w-[25px]', 'size-4');
  bar('tbd', 'pen ~multi ~save refresh | ~addf ~trash ~cut copy ~paste | selexp selall invert desel1 funnel movetop pansel zsel | ~newfld ~newfld calc abacus | cond | dock gearcur', 'w-[25px]', 'size-4');

  // layer tree
  const box = c => `<svg class="size-[22px]" viewBox="0 0 22 22"><path d="M.5.500h21v21H.5z" fill="${c}" stroke="#444"/></svg>`;
  const line = c => `<svg class="size-[22px]" viewBox="0 0 22 22"><path d="M0 9h22" stroke="${c}" stroke-width="2"/></svg>`;
  const dot = c => `<svg class="size-[22px] mr-px" viewBox="0 0 22 22"><circle cx="12" cy="10" r="5.500" fill="${c}" stroke="#333"/></svg>`;
  const tiles = '<svg class="size-[22px] mr-px" viewBox="0 0 22 22"><path d="M2 1h20v13H8v7H2z" fill="#a9c4e2"/><path d="M15 14v6H9v-6z" fill="#c8dbef"/><path d="M2 1h7v6H2zM15 1h7v6h-7zM9 7h6v7H9zM2 14h7v6H2z" fill="#2c3e55"/></svg>';
  $('layers').innerHTML = [
    ['landuse', 0, box('#e69f87')], ['buildings', 1, box('#e31a1c')], ['waterways', 0, line('#6ee8ee')], ['roads', 0, line('#6e6c78')],
    ['pois', 1, dot('#a39be4')], ['pofw', 0, dot('#9ad484')], ['OpenStreetMap', 1, tiles], ['الحدود_الإدارية_القاهرة', 1, box('#faf0dc')]
  ].map(([n, on, sw]) => `<li class="h-[27px] flex items-center ${n === 'pois' ? 'bg-[#f0f0f0]' : ''}">
      <span class="w-[33px] pl-[9px]">${n === 'OpenStreetMap' ? '<svg class="w-3 h-2" viewBox="0 0 12 8"><path d="M0 1h12L6 7z" fill="#555"/></svg>' : ''}</span>
      <label class="flex items-center"><span class="grid place-items-center mr-1.5"><input type="checkbox" ${on ? 'checked' : ''} class="peer [grid-area:1/1] appearance-none size-[21px] border border-[#c0c0c0] bg-white"><svg class="[grid-area:1/1] size-4 invisible peer-checked:visible pointer-events-none" viewBox="0 0 16 16"><path d="M2 7.500L6 14 14.500 1" fill="none" stroke="#000" stroke-width="2.600"/></svg></span>
      ${sw}<span class="ml-[6px] pt-px ${on ? '' : 'italic text-[#828282]'} ${n === 'pois' ? 'underline underline-offset-2' : ''} ${n[0] > 'z' ? 'text-[15px]' : ''}">${n}</span></label></li>`).join('');

  // feature rows of the attribute table
  $('feats').innerHTML = [
    [301, '4401043992', 2121, 'dentist', 'عياده اسنان د. محمد طل...'], [302, '4359228295', 2301, 'restaurant', 'صبحي كابر'],
    [303, '4359228295', 2721, 'attraction', 'صبحي كابر'], [304, '4359964489', 2501, 'supermarket', 'سوبر ماركت الطاهرة'],
    [305, '4362061593', 2522, 'sports_shop', 'Stars tennis academy'], [306, '4358590890', 2082, 'school', 'مدرسة الفردوس الخاصة ...'],
    [307, '4358615089', 2721, 'attraction', 'كلية الصيدلة MTI'], [308, '4358882094', 2511, 'convenience', 'الحلواني للسيراميك'],
    [309, '4358909689', 2511, 'convenience', 'سوبر ماركت زيدان']
  ].map(([i, id, c, f, n]) => {
    const row = i === 302 || i === 303 ? 'bg-[#0078d7] text-white' : i % 2 ? 'bg-white' : 'bg-[#e8e6e2]';
    return `<tr class="h-[45px] ${row}">
      <th class="border-b border-r border-[#a8a8a8] bg-linear-to-b from-white to-[#ebebeb] font-normal text-black text-left pl-1 pt-[3px]">${i}</th>
      <td class="border-b border-r border-[#c4c4c4] pl-[3px] pt-[3px]">${id}</td><td class="border-b border-r border-[#c4c4c4] pr-[3px] pt-[3px] text-right">${c}</td>
      <td class="border-b border-r border-[#c4c4c4] pl-[3px] pt-[3px]">${f}</td><td class="border-b border-r border-[#c4c4c4] pl-[3px] pt-[3px] whitespace-nowrap">${n}</td></tr>`;
  }).join('');

  // topology errors; the list is scrolled so that its first row is partly hidden
  const ids = [10, 28, 213, 362, 746, 1156, 1289, 1562, 1565, 2464];
  let rows = '';
  for (let n = 626; n <= 657; n++) {
    const g = n < 648, cur = n === 653, first = n === 626;
    const h = first ? 'h-[15px]' : 'h-[19px]', up = first ? '-mt-1' : '';
    const cell = (t, c) => `<td class="border-b border-r border-[#c4c4c4] p-0"><div class="${h} overflow-hidden whitespace-nowrap px-[3px] ${c}"><div class="${up} leading-[26px]">${t}</div></div></td>`;
    rows += `<tr class="${cur ? 'bg-[#0078d7] text-white' : ''}">
      <th class="border-b border-r border-[#a8a8a8] bg-linear-to-b from-white to-[#ebebeb] p-0 text-black text-left ${cur ? 'font-bold' : 'font-normal'}"><div class="${h} overflow-hidden pl-[3px]"><div class="${up} leading-[22px]">${n}</div></div></th>
      ${cell(g ? 'gaps' : 'duplicate geometry', '')}${cell(g ? 'buildings' : 'pois', 'text-right')}${cell(g ? '-92233720368547758...' : ids[n - 648], g ? '' : 'text-right')}</tr>`;
  }
  $('errs').innerHTML = rows;

  // house numbers on the map
  $('nums').innerHTML = [['2', 646, 630], ['4', 726, 643], ['6', 799, 662], ['4', 873, 682], ['5', 980, 714], ['16', 1068, 739], ['14', 1130, 756], ['10', 1208, 778], ['10', 1116, 630], ['15', 1175, 646], ['8', 1241, 663], ['5', 1246, 716], ['19', 1369, 696], ['18', 1330, 811], ['20', 1390, 828], ['97', 657, 779], ['3', 719, 794], ['2', 808, 811], ['7', 944, 836], ['9', 981, 847], ['11', 1027, 859], ['13', 1086, 876], ['15', 1145, 892], ['4', 1208, 909], ['12', 1197, 949], ['8', 946, 936], ['10R', 1062, 974], ['19', 1293, 936], ['21', 1346, 950], ['23', 1402, 965], ['4A', 492, 854], ['114', 467, 952], ['17', 1403, 455], ['16', 1377, 562]]
    .map(([t, x, y]) => `<text x="${x}" y="${y + 7}">${t}</text>`).join('');
</script>
</body>
</html>
